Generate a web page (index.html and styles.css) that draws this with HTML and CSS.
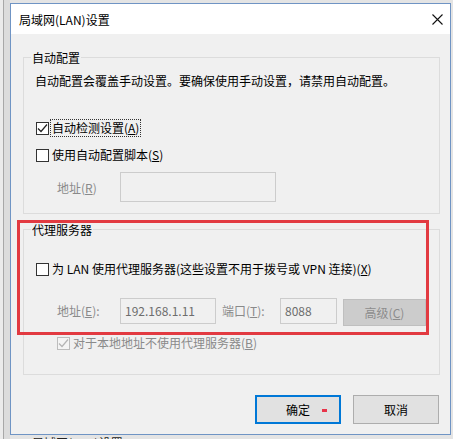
FILE: index.html
```html
<!DOCTYPE html>
<html lang="zh-CN">
<head>
<meta charset="utf-8">
<title>局域网(LAN)设置</title>
<link rel="stylesheet" href="styles.css">
</head>
<body>
<div class="dialog">
  <div class="titlebar">
    <span class="title">局域网(LAN)设置</span>
    <svg class="close" width="11" height="11" viewBox="0 0 11 11"><path d="M0.5 0.5 L10.5 10.5 M10.5 0.5 L0.5 10.5" stroke="#111" stroke-width="1.1" fill="none"/></svg>
  </div>
  <div class="content">
    <fieldset class="group g1">
      <legend>自动配置</legend>
      <div class="desc">自动配置会覆盖手动设置。要确保使用手动设置，请禁用自动配置。</div>
      <div class="row r1">
        <span class="cb"><svg width="11" height="11" viewBox="0 0 11 11"><path d="M1 5.5 L4 8.5 L10 1.5" stroke="#222" stroke-width="1.2" fill="none"/></svg></span>
        <span class="lbl focus">自动检测设置(<u>A</u>)</span>
      </div>
      <div class="row r2">
        <span class="cb"></span>
        <span class="lbl">使用自动配置脚本(<u>S</u>)</span>
      </div>
      <div class="addr a1">
        <span class="flabel dim w-addr">地址(<u>R</u>)</span>
        <span class="field f-script"></span>
      </div>
    </fieldset>
    <fieldset class="group g2">
      <legend>代理服务器</legend>
      <div class="row r3">
        <span class="cb"></span>
        <span class="lbl">为 LAN 使用代理服务器(这些设置不用于拨号或 VPN 连接)(<u>X</u>)</span>
      </div>
      <div class="addr a2">
        <span class="flabel dim w-addr">地址(<u>E</u>):</span>
        <span class="field f-ip">192.168.1.11</span>
        <span class="flabel dim w-port">端口(<u>T</u>):</span>
        <span class="field f-port">8088</span>
        <span class="btn-adv">高级(<u>C</u>)</span>
      </div>
      <div class="row r4">
        <span class="cb cb-dis"><svg width="11" height="11" viewBox="0 0 11 11"><path d="M1 5.5 L4 8.5 L10 1.5" stroke="#b4b4b4" stroke-width="1.2" fill="none"/></svg></span>
        <span class="lbl dim">对于本地地址不使用代理服务器(<u>B</u>)</span>
      </div>
    </fieldset>
    <div class="buttons">
      <span class="btn btn-ok">确定<span class="mark"></span></span>
      <span class="btn">取消</span>
    </div>
    <div class="annot"></div>
  </div>
</div>
<div class="behind">局域网(LAN)设置</div>
</body>
</html>
```
FILE: styles.css
```css
html, body {
  margin: 0;
  width: 453px;
  height: 439px;
  overflow: hidden;
}
body {
  box-sizing: border-box;
  padding: 3px 2px 0 10px;
  background: linear-gradient(to right, #ebebeb 3px, #a8a8a8 3px, #a8a8a8 4px, #dcdcdc 4px, #dcdcdc 10px, #e4e4e4 10px);
  font-family: "Noto Sans CJK SC", "Microsoft YaHei", sans-serif;
  font-size: 12px;
  color: #000;
}
.dialog {
  width: 441px;
  height: 432px;
  box-sizing: border-box;
  border: 1px solid #6f94c4;
  background: #f0f0f0;
  display: flex;
  flex-direction: column;
}
.titlebar {
  height: 30px;
  flex: none;
  background: #fff;
  display: flex;
  align-items: center;
  justify-content: space-between;
  padding: 0 7px 0 8px;
}
.title {
  line-height: 16px;
  margin-top: 2px;
}
.close {
  display: block;
  margin-top: 0px;
}
.content {
  position: relative;
  flex: 1;
  padding: 0 10px 0 12px;
}
.group {
  margin: 0;
  padding: 0;
  border: 1px solid #dcdcdc;
  min-width: 0;
}
.group legend {
  margin-left: 7px;
  padding: 0 1px;
  line-height: 17px;
}
.g1 {
  margin-top: 15px;
  padding-bottom: 11px;
}
.g2 {
  margin-top: 7px;
  padding-bottom: 22px;
}
.desc {
  margin: 7px 0 0 11px;
  line-height: 16px;
}
.row {
  display: flex;
  align-items: center;
  height: 18px;
}
.r1 { margin: 30px 0 0 12px; }
.r2 { margin: 9px 0 0 12px; }
.r3 { margin: 22px 0 0 12px; }
.r4 { margin: 8px 0 0 33px; }
.cb {
  width: 13px;
  height: 13px;
  box-sizing: border-box;
  border: 1px solid #333;
  background: #fff;
  display: flex;
  align-items: center;
  justify-content: center;
  flex: none;
}
.cb svg { display: block; }
.cb-dis {
  border-color: #bcbcbc;
  background: #f4f4f4;
}
.lbl {
  margin-left: 1px;
  padding: 0 1px;
  line-height: 16px;
  border: 1px dotted transparent;
  white-space: nowrap;
}
.lbl.focus {
  border-color: #333;
}
.dim {
  color: #8a8a8a;
}
.addr {
  display: flex;
  align-items: flex-start;
}
.a1 {
  margin: 8px 0 0 33px;
}
.a2 {
  margin: 20px 0 0 33px;
}
.flabel {
  line-height: 16px;
  white-space: nowrap;
}
.a1 .flabel { margin-top: 8px; }
.a2 .flabel { margin-top: 5px; }
.w-addr { width: 63px; }
.w-port { width: 58px; margin-left: 6px; }
.field {
  box-sizing: border-box;
  border: 1px solid #cccccc;
  background: #f0f0f0;
  color: #6d6d6d;
  line-height: 16px;
  padding: 4px 4px;
}
.f-script {
  width: 156px;
  height: 30px;
}
.f-ip {
  width: 96px;
  height: 26px;
}
.f-port {
  width: 57px;
  height: 26px;
}
.btn-adv {
  box-sizing: border-box;
  width: 83px;
  height: 27px;
  margin: 1px 0 0 6px;
  background: #cccccc;
  border: 1px solid #bfbfbf;
  color: #8c8c8c;
  display: flex;
  align-items: center;
  justify-content: center;
}
.buttons {
  display: flex;
  justify-content: flex-end;
  gap: 12px;
  margin: 20px 1px 0 0;
}
.btn {
  position: relative;
  box-sizing: border-box;
  width: 86px;
  height: 29px;
  background: #e1e1e1;
  border: 1px solid #adadad;
  display: flex;
  align-items: center;
  justify-content: center;
}
.btn-ok {
  border: 2px solid #0078d7;
}
.mark {
  position: absolute;
  left: 65px;
  top: 12px;
  width: 5px;
  height: 3px;
  background: #e8344a;
}
.annot {
  position: absolute;
  left: 6px;
  top: 186px;
  width: 412px;
  height: 115px;
  box-sizing: border-box;
  border: 3px solid #e23a41;
}
.behind {
  margin: 0 0 0 22px;
  line-height: 16px;
  color: #222;
}
```
